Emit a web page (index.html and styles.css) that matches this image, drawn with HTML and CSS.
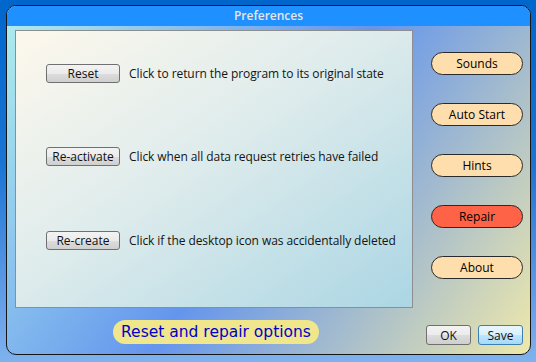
FILE: index.html
```html
<!DOCTYPE html>
<html lang="en">
<head>
    <meta charset="UTF-8">
    <title>Preferences</title>
    <link rel="stylesheet" href="styles.css">
</head>
<body>
    <div class="window">
        <div class="titlebar">Preferences</div>
        <div class="content">
            <div class="panel">
                <div class="option">
                    <button class="button">Reset</button>
                    <span class="option-text">Click to return the program to its original state</span>
                </div>
                <div class="option">
                    <button class="button">Re-activate</button>
                    <span class="option-text">Click when all data request retries have failed</span>
                </div>
                <div class="option">
                    <button class="button">Re-create</button>
                    <span class="option-text">Click if the desktop icon was accidentally deleted</span>
                </div>
            </div>
            <div class="sidebar">
                <button class="pill">Sounds</button>
                <button class="pill">Auto Start</button>
                <button class="pill">Hints</button>
                <button class="pill pill-active">Repair</button>
                <button class="pill">About</button>
            </div>
            <div class="caption-row">
                <span class="caption">Reset and repair options</span>
            </div>
            <div class="actions">
                <button class="button button-small">OK</button>
                <button class="button button-small button-default">Save</button>
            </div>
        </div>
    </div>
</body>
</html>
```

FILE: styles.css
```css
body {
    margin: 0;
    width: 536px;
    height: 362px;
    overflow: hidden;
    font-family: "Open Sans", "Noto Sans", sans-serif;
    background: linear-gradient(to bottom, #0066cc 0%, #1a74d4 45%, #5f9ae6 80%, #7fb2ee 100%);
}
.window {
    width: 523px;
    height: 348px;
    margin: 5px 0 0 6px;
    border: 1px solid #161616;
    border-radius: 10px;
    overflow: hidden;
    background: linear-gradient(124deg, #afeeee 0%, #6495ed 50%, #eee8aa 100%);
}
.titlebar {
    height: 20px;
    line-height: 20px;
    background-color: #1e90ff;
    color: #e6e6e6;
    font-size: 12px;
    font-weight: 600;
    text-align: center;
}
.content {
    display: grid;
    grid-template-columns: 398px 1fr;
    column-gap: 18px;
    padding: 4px 7px 0 8px;
}
.panel {
    height: 278px;
    border: 1px solid #8e8e8e;
    background: linear-gradient(to bottom right, #fdf8ec 0%, #dfecec 45%, #abd6e4 100%);
    display: flex;
    flex-direction: column;
    gap: 64px;
    padding: 33px 0 0 30px;
    box-sizing: border-box;
}
.option {
    display: flex;
    align-items: center;
    gap: 9px;
    height: 19px;
}
.option:nth-child(3) {
    margin-top: 1px;
}
.option-text {
    font-size: 12px;
    letter-spacing: -0.08px;
    color: #141414;
}
.button {
    width: 74px;
    height: 19px;
    padding: 0;
    font-family: inherit;
    font-size: 12px;
    color: #111;
    border: 1px solid #707070;
    border-radius: 3px;
    background: linear-gradient(to bottom, #f3f3f3 0%, #ebebeb 50%, #dddddd 51%, #cfcfcf 100%);
}
.button-small {
    width: 45px;
    height: 20px;
}
.button-default {
    border-color: #3c7fb1;
    background: linear-gradient(to bottom, #eaf6fd 0%, #d9f0fc 50%, #bee6fd 51%, #a7d9f5 100%);
}
.sidebar {
    display: flex;
    flex-direction: column;
    gap: 28px;
    padding: 22px 0 0 0;
}
.pill {
    width: 92px;
    height: 23px;
    padding: 0;
    font-family: inherit;
    font-size: 12px;
    color: #000;
    border: 1px solid #2a2a2a;
    border-radius: 12px;
    background-color: #ffdead;
}
.pill-active {
    background-color: #ff6347;
}
.caption-row {
    display: flex;
    justify-content: center;
    padding: 12px 0 0 4px;
}
.caption {
    height: 24px;
    line-height: 24px;
    padding: 0 8px;
    border-radius: 12px;
    background-color: #f0e68c;
    color: #0000cd;
    font-family: "DejaVu Sans", sans-serif;
    font-size: 15.5px;
}
.actions {
    display: flex;
    gap: 7px;
    margin-left: -5px;
    padding-top: 17px;
}
```
